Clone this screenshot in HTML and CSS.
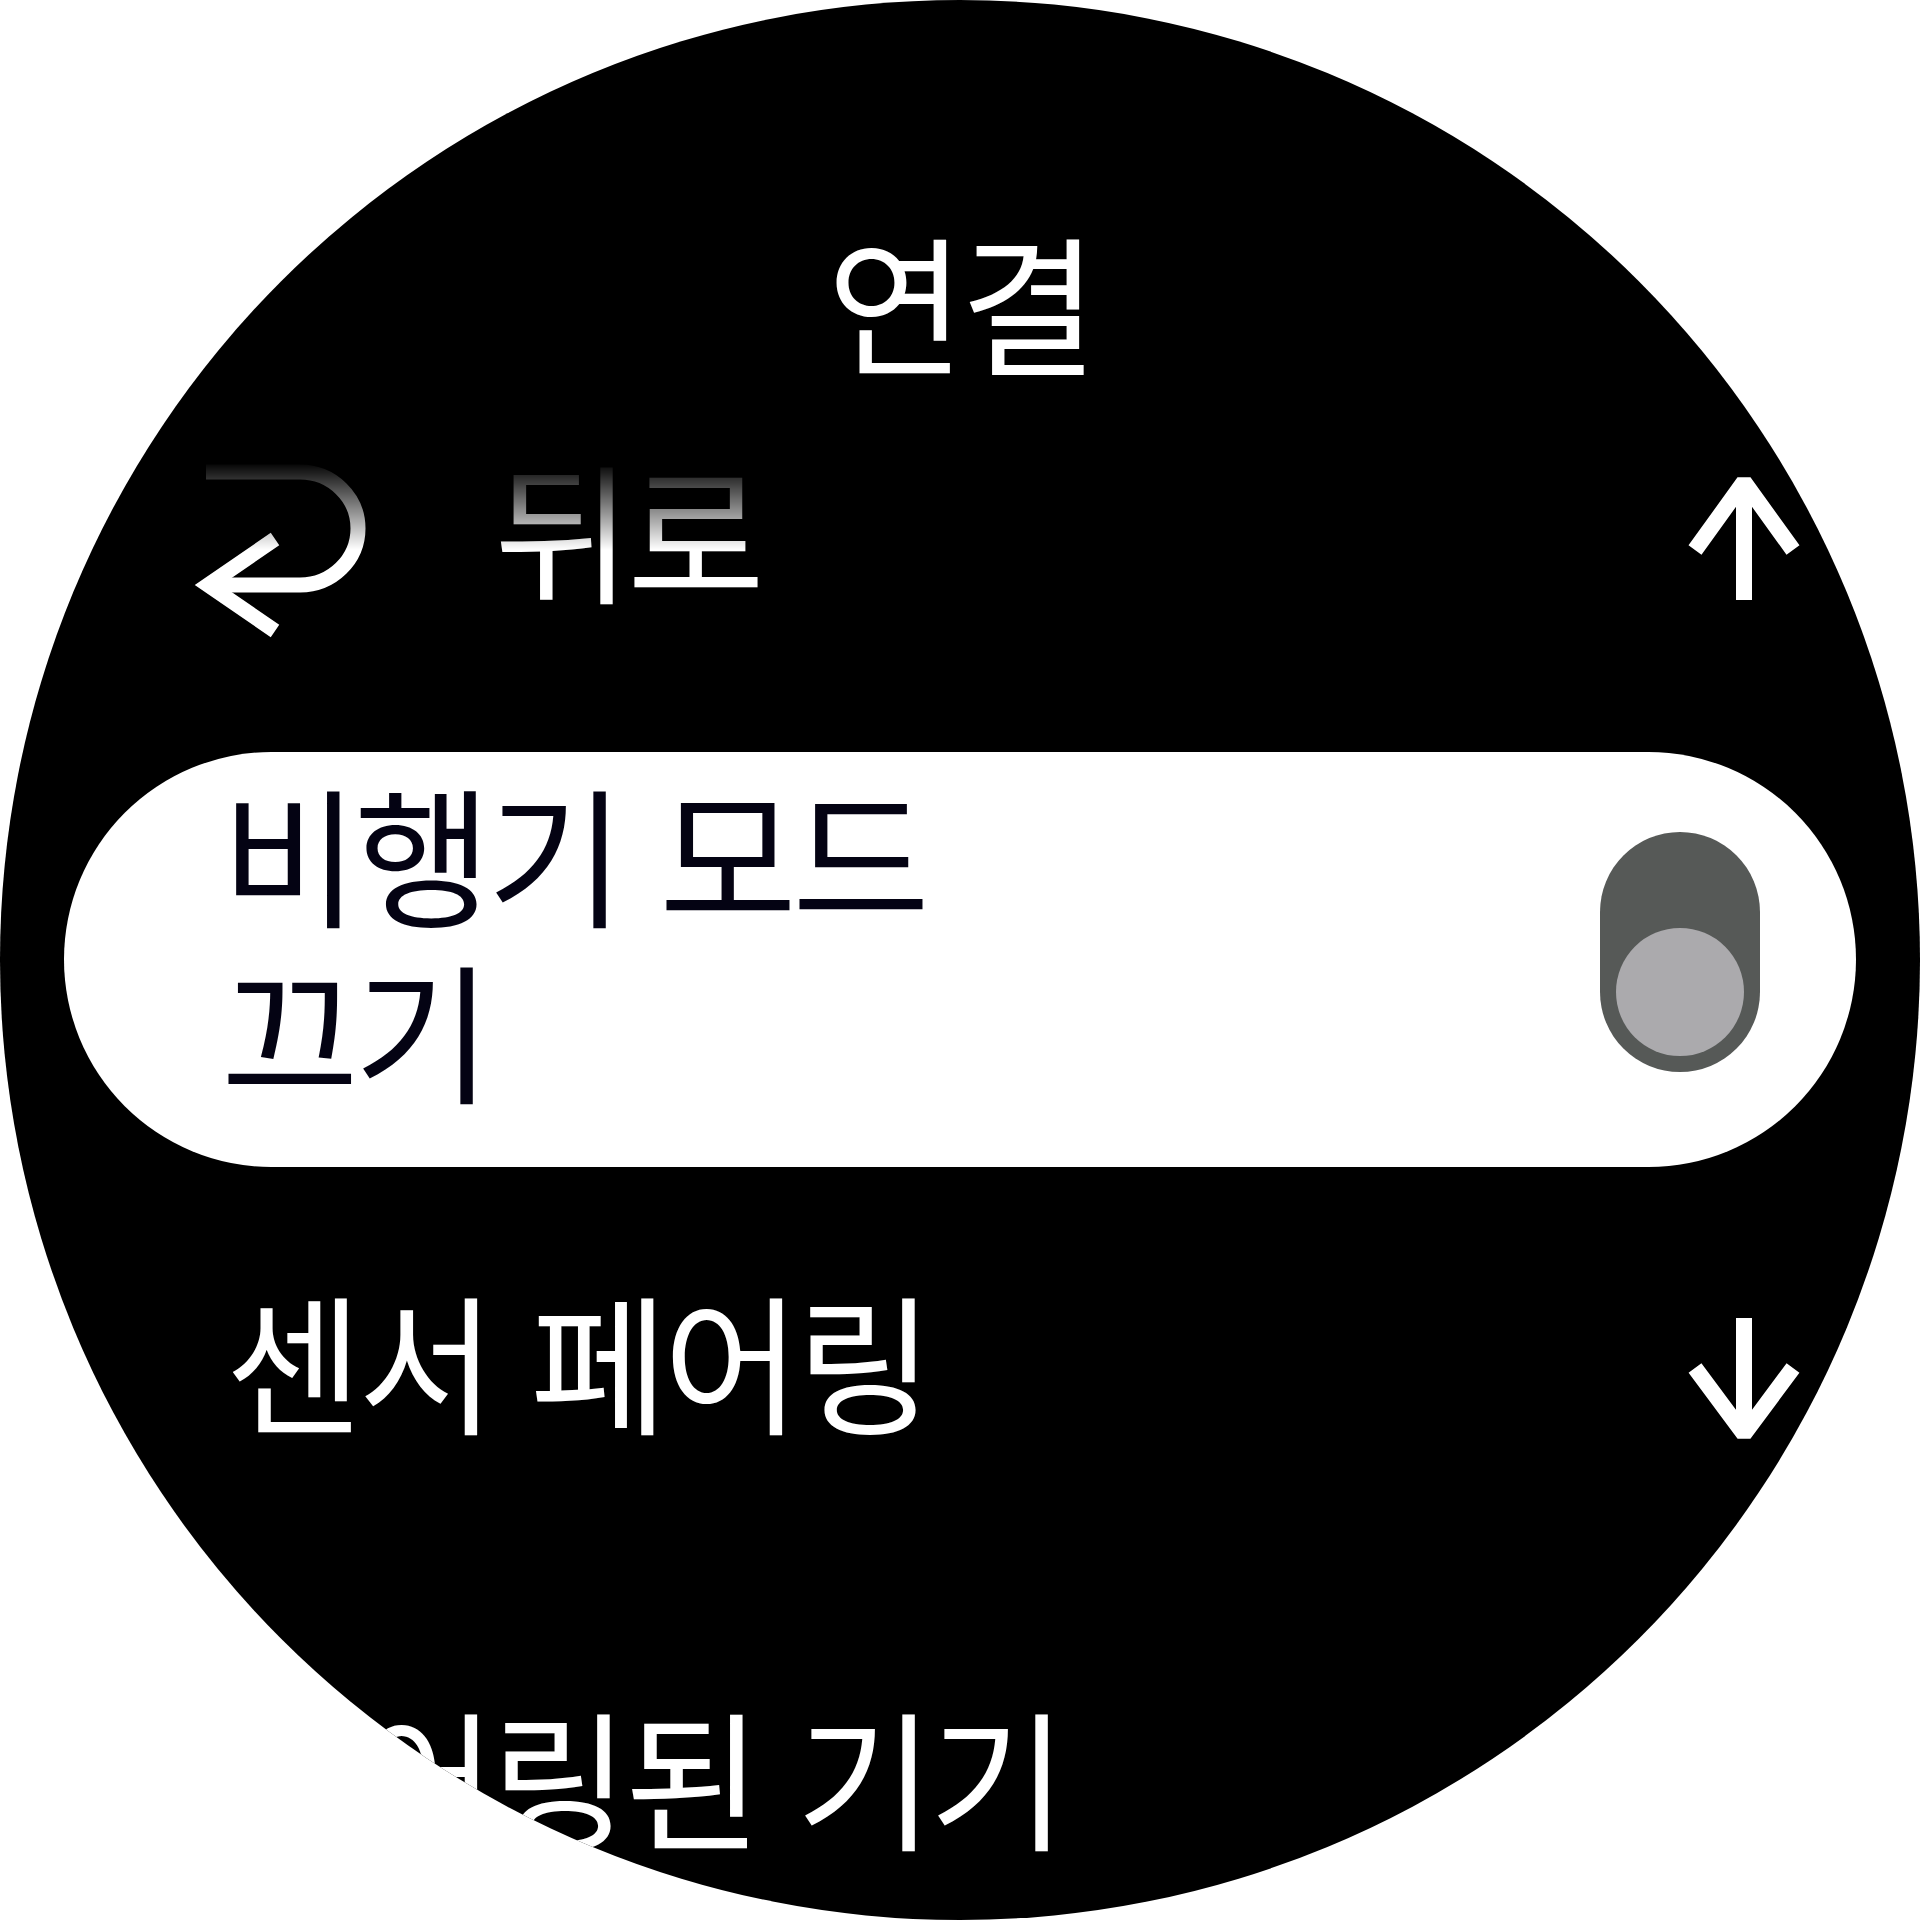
FILE: index.html
```html
<!DOCTYPE html>
<html lang="ko">
<head>
<meta charset="utf-8">
<link rel="stylesheet" href="styles.css">
</head>
<body>
<div class="watch">
  <div class="title">연결</div>
  <div class="row">
    <div class="back">
      <svg class="back-icon" width="210" height="195" viewBox="0 0 210 195">
        <path d="M36 17 H130 A58 56.5 0 0 1 130 130 H38"/>
        <path d="M105 84 L38 130 L105 176"/>
      </svg>
      <span class="label">뒤로</span>
    </div>
    <svg class="arrow arrow-up" width="112" height="136" viewBox="0 0 112 136">
      <path d="M56 14 V132"/>
      <path d="M7 82 L56 14 L105 82"/>
    </svg>
  </div>
  <div class="pill">
    <div class="pill-text">비행기 모드<br>끄기</div>
    <div class="toggle"><div class="knob"></div></div>
  </div>
  <div class="row">
    <span class="label">센서 페어링</span>
    <svg class="arrow arrow-down" width="112" height="136" viewBox="0 0 112 136">
      <path d="M56 4 V120"/>
      <path d="M7 54 L56 120 L105 54"/>
    </svg>
  </div>
  <div class="row">
    <span class="label">페어링된 기기</span>
  </div>
</div>
</body>
</html>
```
FILE: styles.css
```css
html, body {
  margin: 0;
  padding: 0;
  background: #ffffff;
}

.watch {
  width: 1920px;
  height: 1920px;
  border-radius: 50%;
  background: #000000;
  overflow: hidden;
  display: flex;
  flex-direction: column;
  font-family: "Noto Sans CJK KR", "Noto Sans", sans-serif;
  font-size: 150px;
  letter-spacing: -5px;
  word-spacing: 2px;
  color: #ffffff;
}

.title {
  box-sizing: border-box;
  height: 336px;
  padding-top: 224px;
  line-height: 150px;
  text-align: center;
  flex-shrink: 0;
}

.row {
  box-sizing: border-box;
  height: 416px;
  flex-shrink: 0;
  display: flex;
  align-items: center;
  padding: 0 120px 0 225px;
}

.row .label {
  flex: 1;
  line-height: 150px;
  margin-bottom: 34px;
  white-space: nowrap;
}

.back {
  flex: 1;
  display: flex;
  align-items: center;
  margin-left: -55px;
  gap: 114px;
  -webkit-mask-image: linear-gradient(to bottom, transparent 0, transparent 126px, #000 214px);
  mask-image: linear-gradient(to bottom, transparent 0, transparent 126px, #000 214px);
  align-self: stretch;
}

.back .label {
  flex: none;
}

.back-icon {
  margin-top: 17px;
  fill: none;
  stroke: #ffffff;
  stroke-width: 15;
  stroke-linejoin: miter;
  flex: none;
}

.arrow {
  fill: none;
  stroke: #ffffff;
  stroke-width: 16;
  stroke-linejoin: bevel;
  flex: none;
}

.arrow-up {
  margin-bottom: 16px;
}

.arrow-down {
  margin-top: 14px;
}

.pill {
  box-sizing: border-box;
  height: 415px;
  margin: 0 64px;
  flex-shrink: 0;
  background: #ffffff;
  border-radius: 208px;
  display: flex;
  align-items: center;
  padding: 0 96px 0 157px;
  color: #040313;
}

.pill-text {
  flex: 1;
  line-height: 176px;
  margin-bottom: 42px;
  white-space: nowrap;
}

.toggle {
  box-sizing: border-box;
  width: 160px;
  height: 240px;
  border-radius: 80px;
  background: #565957;
  padding: 16px;
  display: flex;
  flex-direction: column;
  justify-content: flex-end;
  margin-bottom: 15px;
  flex: none;
}

.knob {
  width: 128px;
  height: 128px;
  border-radius: 50%;
  background: #abaaad;
}
```
